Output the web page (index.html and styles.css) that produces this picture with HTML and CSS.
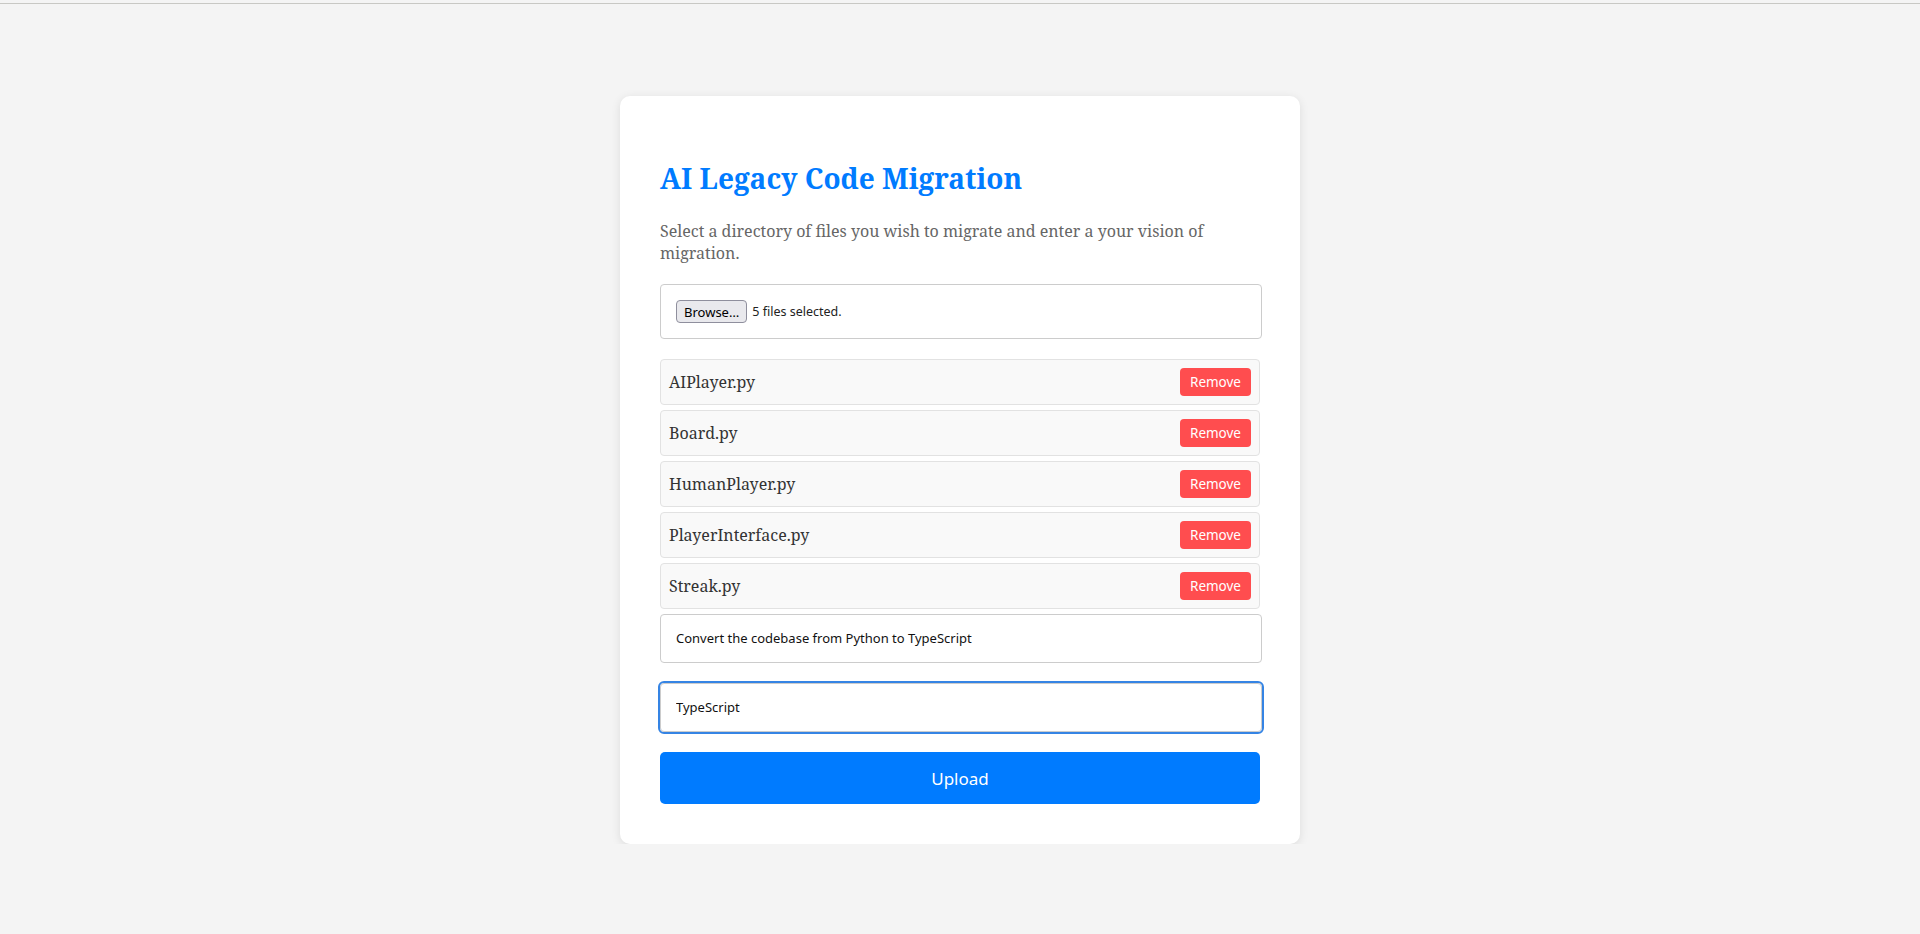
FILE: index.html
```html
<!DOCTYPE html>
<html lang="en">
<head>
  <meta charset="UTF-8">
  <meta name="viewport" content="width=device-width, initial-scale=1.0">
  <title>AI Legacy Code Migration</title>
  <link rel="stylesheet" href="styles.css">
</head>
<body>
  <div class="top-line"></div>

  <main class="container">
    <h1>AI Legacy Code Migration</h1>
    <p class="intro">Select a directory of files you wish to migrate and enter a your vision of migration.</p>

    <div class="file-picker">
      <button class="browse">Browse…</button>
      <span class="file-count">5 files selected.</span>
    </div>

    <ul class="file-list">
      <li class="file-item"><span>AIPlayer.py</span><button class="remove">Remove</button></li>
      <li class="file-item"><span>Board.py</span><button class="remove">Remove</button></li>
      <li class="file-item"><span>HumanPlayer.py</span><button class="remove">Remove</button></li>
      <li class="file-item"><span>PlayerInterface.py</span><button class="remove">Remove</button></li>
      <li class="file-item"><span>Streak.py</span><button class="remove">Remove</button></li>
    </ul>

    <input class="text-field" type="text" value="Convert the codebase from Python to TypeScript">
    <input class="text-field focused" type="text" value="TypeScript">

    <button class="upload">Upload</button>
  </main>
</body>
</html>
```

FILE: styles.css
```css
body {
  margin: 0;
  padding: 0;
  background-color: #f4f4f4;
  font-family: "Noto Serif", "DejaVu Serif", serif;
}

.top-line {
  margin-top: 3px;
  height: 1px;
  background: #c8c8c4;
}

.container {
  width: 600px;
  margin: 92px auto 0;
  padding: 40px;
  background: #ffffff;
  border-radius: 10px;
  box-shadow: 0 2px 10px rgba(0, 0, 0, 0.1);
}

h1 {
  margin: 22px 0 22px;
  font-size: 28px;
  line-height: 40px;
  color: #007bff;
}

.intro {
  margin: 0 0 20px;
  font-size: 16px;
  line-height: 22px;
  color: #666;
}

.file-picker {
  display: flex;
  align-items: center;
  gap: 5px;
  width: 602px;
  box-sizing: border-box;
  padding: 15px;
  border: 1px solid #ccc;
  border-radius: 4px;
  font-family: "Noto Sans", sans-serif;
  font-size: 12.5px;
  color: #222;
}

.browse {
  height: 23px;
  padding: 0 7px;
  background: #e9e9ed;
  border: 1px solid #8f8f9d;
  border-radius: 4px;
  font-family: "Noto Sans", sans-serif;
  font-size: 13px;
  color: #000;
}

.file-list {
  list-style: none;
  margin: 20px 0 0;
  padding: 0;
}

.file-item {
  display: flex;
  align-items: center;
  justify-content: space-between;
  margin-bottom: 5px;
  padding: 8px;
  background: #f9f9f9;
  border: 1px solid #e2e2e2;
  border-radius: 4px;
  font-size: 16px;
  color: #333;
}

.remove {
  height: 28px;
  padding: 0 10px;
  background: #ff4d4f;
  color: #fff;
  border: none;
  border-radius: 4px;
  font-family: "Noto Sans", sans-serif;
  font-size: 13.5px;
}

.text-field {
  display: block;
  width: 602px;
  box-sizing: border-box;
  margin-bottom: 20px;
  padding: 15px;
  border: 1px solid #ccc;
  border-radius: 4px;
  font-family: "Noto Sans", sans-serif;
  font-size: 13px;
  line-height: 17px;
  color: #111;
}

.text-field.focused {
  outline: 2px solid #3584e4;
  outline-offset: 0;
}

.upload {
  display: block;
  width: 100%;
  height: 52px;
  background: #007bff;
  color: #fff;
  border: none;
  border-radius: 5px;
  font-family: "Noto Sans", sans-serif;
  font-size: 17px;
}
```
